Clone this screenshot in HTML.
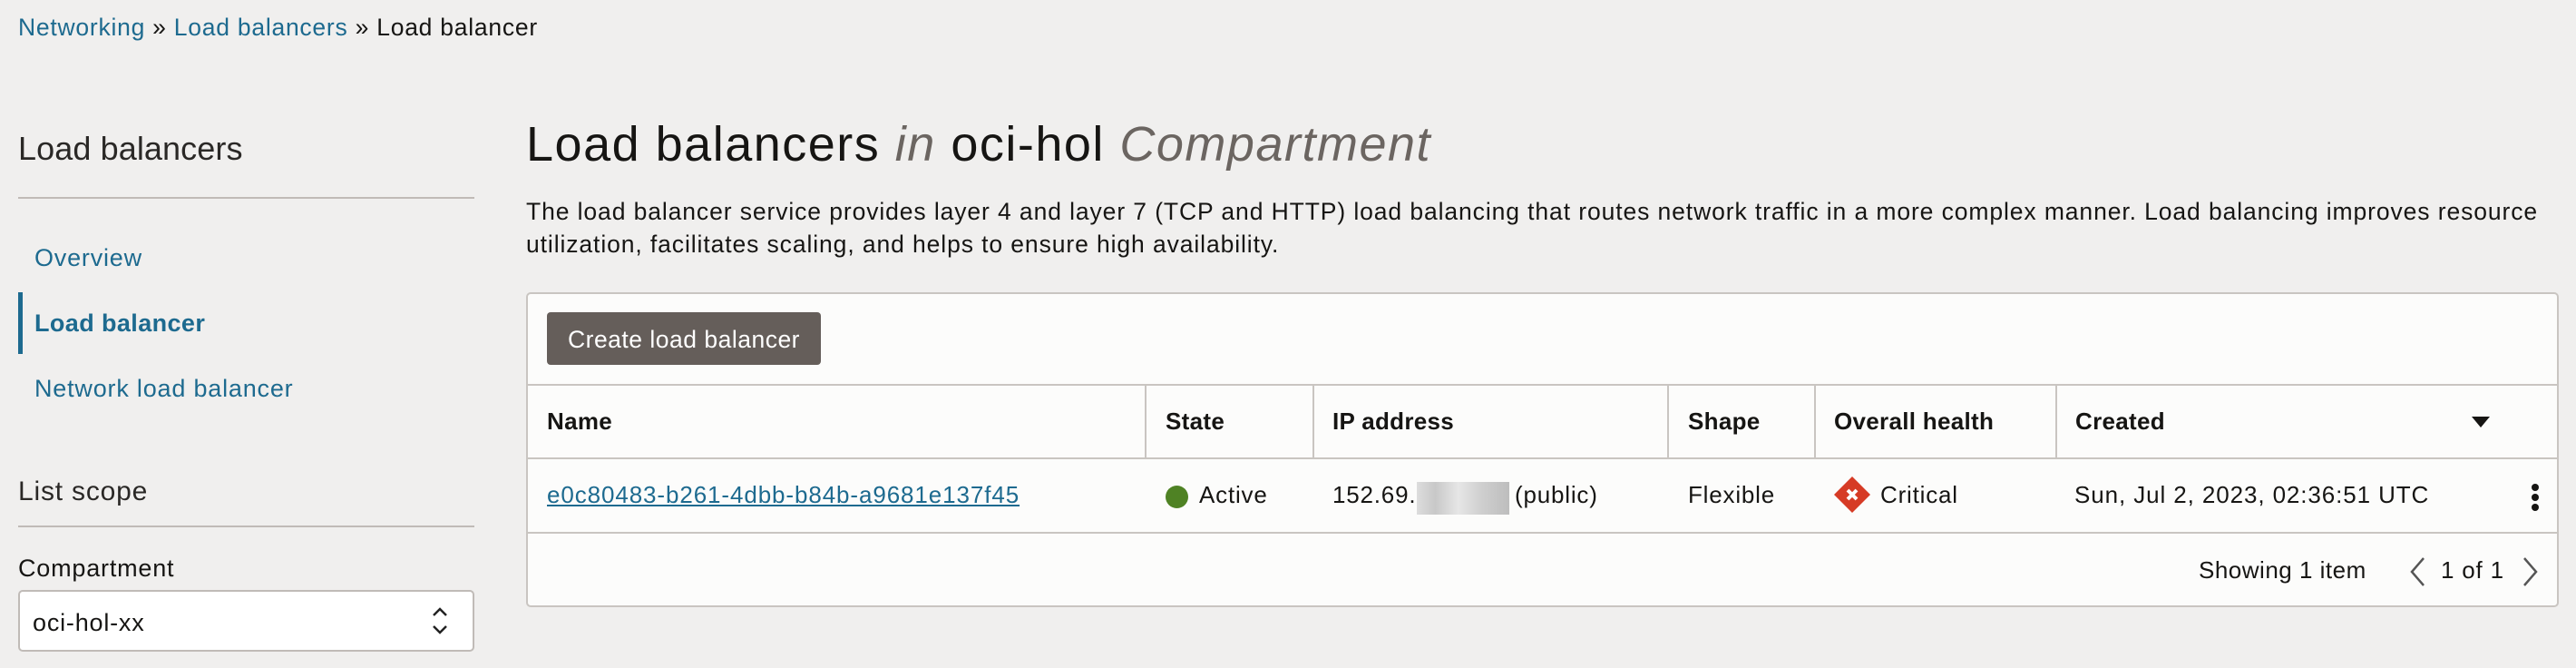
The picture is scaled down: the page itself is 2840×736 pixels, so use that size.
<!DOCTYPE html>
<html><head><meta charset="utf-8"><style>
*{margin:0;padding:0;box-sizing:border-box}
body{width:2840px;height:736px;overflow:hidden;background:#f0efee;font-family:"Liberation Sans",sans-serif;color:#161513;position:relative;letter-spacing:0.8px}
.a{position:absolute;white-space:nowrap}
.link{color:#1d6a8f}
.hdr{font-weight:bold;font-size:26px;top:449px;letter-spacing:0.3px}
.cell{font-size:26px;top:530px}
.vl{position:absolute;top:424px;height:81px;width:2px;background:#c9c5c1}
</style></head><body>
<div class="a" style="left:20px;top:15px;font-size:26.5px;letter-spacing:0.75px"><span class="link">Networking</span> » <span class="link">Load balancers</span> » Load balancer</div>

<div class="a" style="left:20px;top:143px;font-size:36px;font-weight:300;color:#2a2826;letter-spacing:0.1px">Load balancers</div>
<div class="a" style="left:20px;top:217px;width:503px;height:2px;background:#c0bbb7"></div>
<div class="a link" style="left:38px;top:269px;font-size:27px">Overview</div>
<div class="a" style="left:20px;top:322px;width:5px;height:68px;background:#1d6a8f"></div>
<div class="a link" style="left:38px;top:341px;font-size:27px;font-weight:bold;letter-spacing:0.4px">Load balancer</div>
<div class="a link" style="left:38px;top:413px;font-size:27px">Network load balancer</div>
<div class="a" style="left:20px;top:525px;font-size:30px;font-weight:300;color:#2a2826">List scope</div>
<div class="a" style="left:20px;top:579px;width:503px;height:2px;background:#c0bbb7"></div>
<div class="a" style="left:20px;top:611px;font-size:27px">Compartment</div>
<div class="a" style="left:20px;top:650px;width:503px;height:68px;border:2px solid #c0bbb7;border-radius:5px;background:#fff"></div>
<div class="a" style="left:36px;top:671px;font-size:27px">oci-hol-xx</div>
<svg class="a" style="left:475px;top:668px" width="20" height="32" viewBox="0 0 20 32"><path d="M3 10 L10 3 L17 10 M3 22 L10 29 L17 22" fill="none" stroke="#222" stroke-width="2.5"/></svg>

<div class="a" style="left:580px;top:128px;font-size:54px;letter-spacing:1.5px">Load balancers <i style="color:#6b6561">in</i> oci-hol <i style="color:#6b6561">Compartment</i></div>
<div class="a" style="left:580px;top:215px;width:2240px;white-space:normal;font-size:26.5px;line-height:36px;letter-spacing:0.9px">The load balancer service provides layer 4 and layer 7 (TCP and HTTP) load balancing that routes network traffic in a more complex manner. Load balancing improves resource utilization, facilitates scaling, and helps to ensure high availability.</div>

<div class="a" style="left:580px;top:322px;width:2241px;height:347px;background:#fcfcfb;border:2px solid #c9c5c1;border-radius:5px"></div>
<div class="a" style="left:603px;top:344px;width:302px;height:58px;background:#655e5a;border-radius:4px;color:#fff;font-size:26.5px;line-height:60px;text-align:center;letter-spacing:0.5px">Create load balancer</div>
<div class="a" style="left:582px;top:423px;width:2237px;height:2px;background:#c9c5c1"></div>
<div class="a" style="left:582px;top:504px;width:2237px;height:2px;background:#c9c5c1"></div>
<div class="a" style="left:582px;top:586px;width:2237px;height:2px;background:#c9c5c1"></div>
<div class="vl" style="left:1262px"></div><div class="vl" style="left:1447px"></div><div class="vl" style="left:1838px"></div><div class="vl" style="left:2000px"></div><div class="vl" style="left:2266px"></div>

<div class="a hdr" style="left:603px">Name</div>
<div class="a hdr" style="left:1285px">State</div>
<div class="a hdr" style="left:1469px">IP address</div>
<div class="a hdr" style="left:1861px">Shape</div>
<div class="a hdr" style="left:2022px">Overall health</div>
<div class="a hdr" style="left:2288px">Created</div>
<svg class="a" style="left:2725px;top:459px" width="20" height="12"><path d="M0 0H20L10 12Z" fill="#161513"/></svg>

<div class="a cell link" style="left:603px;text-decoration:underline;letter-spacing:0.9px">e0c80483-b261-4dbb-b84b-a9681e137f45</div>
<div class="a" style="left:1285px;top:535px;width:25px;height:25px;border-radius:50%;background:#4f8224"></div>
<div class="a cell" style="left:1322px">Active</div>
<div class="a cell" style="left:1469px">152.69.</div>
<div class="a" style="left:1562px;top:531px;width:102px;height:36px;background:linear-gradient(90deg,#ddd 0,#c8c8c8 20%,#e6e6e6 45%,#cfcfcf 70%,#bdbdbd 100%)"></div>
<div class="a cell" style="left:1670px">(public)</div>
<div class="a cell" style="left:1861px">Flexible</div>
<svg class="a" style="left:2022px;top:525px" width="40" height="40" viewBox="0 0 40 40"><path d="M20 0L40 20L20 40L0 20Z" fill="#d63b25"/><path d="M15 15L25 25M25 15L15 25" stroke="#fff" stroke-width="4"/></svg>
<div class="a cell" style="left:2073px">Critical</div>
<div class="a cell" style="left:2287px;letter-spacing:0.9px">Sun, Jul 2, 2023, 02:36:51 UTC</div>
<div class="a" style="left:2791px;top:533px;width:8px;height:8px;border-radius:50%;background:#161513;box-shadow:0 11px 0 #161513,0 22px 0 #161513"></div>

<div class="a" style="left:2424px;top:613px;font-size:26px;letter-spacing:0.5px">Showing 1 item</div>
<svg class="a" style="left:2655px;top:613px" width="20" height="34"><path d="M17 2L4 17L17 32" fill="none" stroke="#555" stroke-width="2.5"/></svg>
<div class="a" style="left:2691px;top:613px;font-size:26px">1 of 1</div>
<svg class="a" style="left:2780px;top:613px" width="20" height="34"><path d="M3 2L16 17L3 32" fill="none" stroke="#555" stroke-width="2.5"/></svg>
</body></html>
